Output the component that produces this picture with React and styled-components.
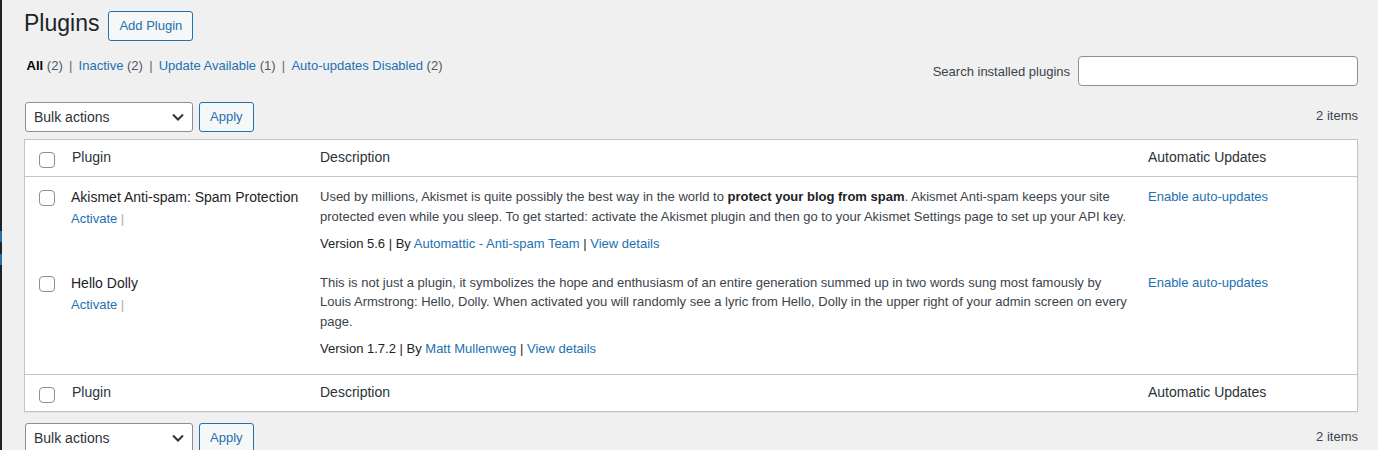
import React from 'react';
import styled, {createGlobalStyle} from 'styled-components';

const colors = {
    bg: '#f0f0f1',
    menu: '#1d2327',
    blue: '#2271b1',
    border: '#c3c4c7',
    input: '#8c8f94',
    text: '#3c434a',
    dark: '#1d2327',
    head: '#2c3338',
    muted: '#50575e',
    sep: '#a7aaad',
}

const GlobalStyle = createGlobalStyle`
  *, *::before, *::after {
    box-sizing: border-box;
  }

  body {
    margin: 0;
    background: ${colors.bg};
    font-family: "Liberation Sans", Arial, sans-serif;
    font-size: 13px;
    color: ${colors.text};
  }
`

const plugins = [
    {
        id: 'akismet',
        name: 'Akismet Anti-spam: Spam Protection',
        description: (
            <>
                Used by millions, Akismet is quite possibly the best way in the world to <strong>protect your blog from spam</strong>. Akismet Anti-spam keeps your site protected even while you sleep. To get started: activate the Akismet plugin and then go to your Akismet Settings page to set up your API key.
            </>
        ),
        version: '5.6',
        author: 'Automattic - Anti-spam Team',
        padBottom: 9,
    },
    {
        id: 'hello-dolly',
        name: 'Hello Dolly',
        description: 'This is not just a plugin, it symbolizes the hope and enthusiasm of an entire generation summed up in two words sung most famously by Louis Armstrong: Hello, Dolly. When activated you will randomly see a lyric from Hello, Dolly in the upper right of your admin screen on every page.',
        version: '1.7.2',
        author: 'Matt Mullenweg',
        padBottom: 15,
    },
]

const filters = [
    {label: 'All', count: 2, current: true},
    {label: 'Inactive', count: 2},
    {label: 'Update Available', count: 1},
    {label: 'Auto-updates Disabled', count: 2},
]

const Chevron = () => (
    <svg width="14" height="10" viewBox="0 0 14 10">
        <path d="M2 2.5 L7 7.5 L12 2.5" fill="none" stroke={colors.head} strokeWidth="2"/>
    </svg>
)

const TableNav = ({top}) => (
    <Nav $top={top}>
        <Select>
            <span>Bulk actions</span>
            <Chevron/>
        </Select>
        <Button>Apply</Button>
        <ItemCount>2 items</ItemCount>
    </Nav>
)

const ColumnHeads = ({foot}) => (
    <tr>
        <CheckHead $foot={foot}><Checkbox type="checkbox"/></CheckHead>
        <Head $foot={foot}>Plugin</Head>
        <Head $foot={foot}>Description</Head>
        <Head $foot={foot}>Automatic Updates</Head>
    </tr>
)

export default function App() {
    return (
        <>
            <GlobalStyle/>
            <Page>
                <Sidebar>
                    <MenuMark/>
                    <MenuMark/>
                </Sidebar>
                <Wrap>
                    <TitleRow>
                        <Title>Plugins</Title>
                        <Button $top={3}>Add Plugin</Button>
                    </TitleRow>

                    <FilterBar>
                        <Filters>
                            {filters.map(({label, count, current}, i) => (
                                <li key={label}>
                                    <FilterLink $current={current}>
                                        {label} <Count>({count})</Count>
                                    </FilterLink>
                                    {i < filters.length - 1 && <Sep> | </Sep>}
                                </li>
                            ))}
                        </Filters>
                        <Search>
                            <label htmlFor="plugin-search">Search installed plugins</label>
                            <SearchInput id="plugin-search" type="search"/>
                        </Search>
                    </FilterBar>

                    <TableNav top={16}/>

                    <Table>
                        <colgroup>
                            <Col $w={37}/>
                            <Col $w={248}/>
                            <col/>
                            <Col $w={219}/>
                        </colgroup>
                        <thead>
                        <ColumnHeads/>
                        </thead>
                        <tbody>
                        {plugins.map(({id, name, description, version, author, padBottom}) => (
                            <tr key={id}>
                                <CheckCell><Checkbox type="checkbox"/></CheckCell>
                                <Cell $pb={padBottom} $pl={9}>
                                    <PluginName>{name}</PluginName>
                                    <RowActions>
                                        <Link>Activate</Link> |
                                    </RowActions>
                                </Cell>
                                <Cell $pb={padBottom}>
                                    <Desc>{description}</Desc>
                                    <Meta>
                                        Version {version} | By <Link>{author}</Link> | <Link>View details</Link>
                                    </Meta>
                                </Cell>
                                <Cell $pb={padBottom}>
                                    <Link>Enable auto-updates</Link>
                                </Cell>
                            </tr>
                        ))}
                        </tbody>
                        <tfoot>
                        <ColumnHeads foot/>
                        </tfoot>
                    </Table>

                    <TableNav top={11}/>
                </Wrap>
            </Page>
        </>
    )
}

const Page = styled.div`
  display: flex;
  min-height: 100vh;
`

const Sidebar = styled.div`
  width: 2px;
  flex-shrink: 0;
  background: ${colors.menu};
  display: flex;
  flex-direction: column;
  gap: 12px;
  padding-top: 231px;
`

const MenuMark = styled.div`
  height: 11px;
  background: ${colors.blue};
`

const Wrap = styled.div`
  flex: 1;
  min-width: 0;
  padding: 8px 20px 0 22px;
`

const TitleRow = styled.div`
  display: flex;
  align-items: flex-start;
  gap: 9px;
`

const Title = styled.h1`
  margin: 0;
  font-size: 23px;
  font-weight: 400;
  line-height: 30px;
  color: ${colors.dark};
`

const Button = styled.button`
  margin-top: ${p => p.$top || 0}px;
  height: 30px;
  padding: 0 10px;
  border: 1px solid ${colors.blue};
  border-radius: 3px;
  background: #f6f7f7;
  color: ${colors.blue};
  font-family: inherit;
  font-size: 13px;
  line-height: 28px;
  cursor: pointer;
`

const FilterBar = styled.div`
  display: flex;
  justify-content: space-between;
  align-items: flex-start;
  margin-top: 15px;
`

const Filters = styled.ul`
  display: flex;
  margin: 0;
  padding: 0;
  list-style: none;
  line-height: 20px;
  color: #646970;
  white-space: pre;

  li {
    display: inline;
  }
`

const FilterLink = styled.a`
  padding: 0 .2em;
  color: ${p => p.$current ? '#000' : colors.blue};
  font-weight: ${p => p.$current ? 600 : 400};
  text-decoration: none;
  cursor: pointer;

  span {
    font-weight: 400;
  }
`

const Count = styled.span`
  color: ${colors.muted};
`

const Sep = styled.span`
  color: #646970;
`

const Search = styled.div`
  display: flex;
  align-items: center;
  gap: 8px;
  color: ${colors.text};
`

const SearchInput = styled.input`
  width: 280px;
  height: 30px;
  margin: 0;
  border: 1px solid ${colors.input};
  border-radius: 4px;
  background: #fff;
  padding: 0 8px;
  font-family: inherit;
  font-size: 14px;
  outline: none;
`

const Nav = styled.div`
  display: flex;
  align-items: flex-start;
  gap: 6px;
  margin: ${p => p.$top}px 0 0 1px;
`

const Select = styled.div`
  width: 168px;
  height: 30px;
  display: flex;
  align-items: center;
  justify-content: space-between;
  padding: 0 7px 0 8px;
  border: 1px solid ${colors.input};
  border-radius: 3px;
  background: #fff;
  color: ${colors.head};
  font-size: 14px;
  cursor: pointer;
`

const ItemCount = styled.span`
  margin-left: auto;
  padding-top: 4px;
  line-height: 20px;
  color: ${colors.text};
`

const Table = styled.table`
  width: 100%;
  margin-top: 7px;
  table-layout: fixed;
  border-spacing: 0;
  border: 1px solid ${colors.border};
  background: #fff;
  box-shadow: 0 1px 1px rgba(0, 0, 0, .04);
`

const Col = styled.col`
  width: ${p => p.$w}px;
`

const Head = styled.th`
  padding: 7px 10px 9px;
  text-align: left;
  font-weight: 400;
  font-size: 14px;
  line-height: 20px;
  color: ${colors.head};
  border-bottom: ${p => p.$foot ? 'none' : `1px solid ${colors.border}`};
  border-top: ${p => p.$foot ? `1px solid ${colors.border}` : 'none'};
`

const CheckHead = styled(Head)`
  padding: 12px 0 0 14px;
  vertical-align: top;
`

const Cell = styled.td`
  padding: 10px 10px ${p => p.$pb}px ${p => p.$pl || 10}px;
  vertical-align: top;
  line-height: 1.5;
`

const CheckCell = styled.td`
  padding: 13px 0 0 14px;
  vertical-align: top;
`

const Checkbox = styled.input`
  appearance: none;
  display: block;
  width: 16px;
  height: 16px;
  margin: 0;
  border: 1px solid ${colors.input};
  border-radius: 4px;
  background: #fff;
  cursor: pointer;
`

const PluginName = styled.strong`
  display: block;
  margin-bottom: 1px;
  font-size: 14px;
  font-weight: 400;
  line-height: 21px;
  color: ${colors.dark};
  white-space: nowrap;
`

const RowActions = styled.div`
  color: ${colors.sep};
`

const Link = styled.a`
  color: ${colors.blue};
  text-decoration: none;
  cursor: pointer;
`

const Desc = styled.p`
  margin: 0 0 8px;

  strong {
    font-weight: 700;
    color: ${colors.dark};
  }
`

const Meta = styled.div`
  color: ${colors.dark};
`
